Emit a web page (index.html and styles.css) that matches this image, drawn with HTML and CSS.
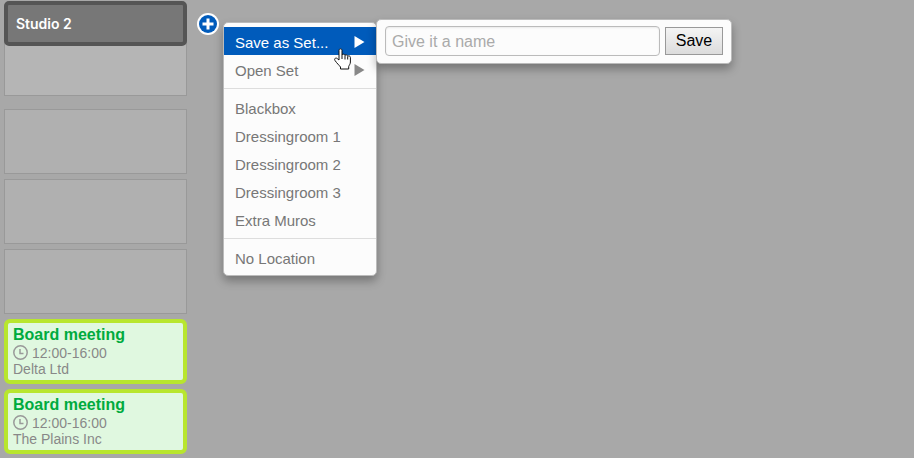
FILE: index.html
```html
<!DOCTYPE html>
<html lang="en">
<head>
<meta charset="utf-8">
<title>Studio 2 planning</title>
<link rel="stylesheet" href="styles.css">
</head>
<body>
<main class="board">
  <section class="column">
    <div class="lane">
      <h1 class="lane-title">Studio 2</h1>
    </div>
    <div class="slots">
      <div class="slot"></div>
      <div class="slot"></div>
      <div class="slot"></div>
      <article class="card">
        <h2 class="card-title">Board meeting</h2>
        <p class="card-line"><svg class="clock" viewBox="0 0 15 15" aria-hidden="true"><circle cx="7.500" cy="7.500" r="6.700"/><path d="M7 4v4.500h3.500"/></svg>12:00-16:00</p>
        <p class="card-line">Delta Ltd</p>
      </article>
      <article class="card">
        <h2 class="card-title">Board meeting</h2>
        <p class="card-line"><svg class="clock" viewBox="0 0 15 15" aria-hidden="true"><circle cx="7.500" cy="7.500" r="6.700"/><path d="M7 4v4.500h3.500"/></svg>12:00-16:00</p>
        <p class="card-line">The Plains Inc</p>
      </article>
    </div>
  </section>
  <div class="adder">
    <button class="add" type="button" aria-label="Add location">
      <svg viewBox="0 0 22 22" aria-hidden="true"><circle class="ring" cx="11" cy="11" r="11"/><circle class="disc" cx="11" cy="11" r="9"/><path class="plus" d="M11 5.500v11M5.500 11h11"/></svg>
    </button>
    <div class="popups">
      <nav class="menu">
        <button class="item active" type="button">Save as Set...<svg class="arrow" viewBox="0 0 10 12" aria-hidden="true"><path d="M0 0l10 6-10 6z"/></svg></button>
        <button class="item" type="button">Open Set<svg class="arrow" viewBox="0 0 10 12" aria-hidden="true"><path d="M0 0l10 6-10 6z"/></svg></button>
        <hr class="rule">
        <button class="item" type="button">Blackbox</button>
        <button class="item" type="button">Dressingroom 1</button>
        <button class="item" type="button">Dressingroom 2</button>
        <button class="item" type="button">Dressingroom 3</button>
        <button class="item" type="button">Extra Muros</button>
        <hr class="rule">
        <button class="item" type="button">No Location</button>
      </nav>
      <form class="save-form">
        <input class="name" type="text" placeholder="Give it a name" aria-label="Set name">
        <button class="save" type="button">Save</button>
      </form>
      <svg class="pointer" viewBox="0 0 17 22" aria-hidden="true"><path d="M5 12V2.500C5 .3 8 .3 8 2.500V7c.4-1.300 2.700-1.100 3 .5.600-1.200 2.500-.8 2.700.8.800-.9 2.700-.4 2.700 1.200V14c0 2-1.200 3-1.700 4.500V21H6.500v-2C5 17 3 15.500 1 12.500-.2 10.500 2 9.300 3.400 10.700z"/><path d="M8 7v4M11 7.500v4M13.700 8.500v3"/></svg>
    </div>
  </div>
</main>
</body>
</html>
```
FILE: styles.css
```css
* {
  box-sizing: border-box;
}

body {
  margin: 0;
  background: #a8a8a8;
  color: #777;
  font-family: "Liberation Sans", Arial, sans-serif;
}

button,
input {
  margin: 0;
  font-family: inherit;
}

.board {
  display: flex;
  align-items: flex-start;
  gap: 10px;
  min-height: 100vh;
  padding: 1px 4px 4px;
}

.column {
  flex: 0 0 20%;
  min-width: 183px;
}

.lane {
  min-height: 95px;
  margin-bottom: 13px;
  border: 1px solid #999;
  border-top: 0;
  border-radius: 6px 6px 0 0;
  background: #b5b5b5;
}

.lane-title {
  margin: 0 -1px;
  padding: 8px;
  border: 4px solid #555;
  border-radius: 5px;
  background: #777;
  color: #fff;
  font: 600 14px/21px Inter, sans-serif;
}

.slots {
  display: grid;
  grid-auto-rows: minmax(65px, auto);
  gap: 5px;
}

.slot {
  border: 1px solid #999;
  background: #b0b0b0;
}

.card {
  padding: 2px 5px 0;
  border: 4px solid #b8e62e;
  border-radius: 6px;
  background: #e0f8e0;
  color: #888;
}

.card-title {
  margin: 0;
  color: #00ab3e;
  font-size: 16px;
  line-height: 20px;
}

.card-line {
  display: flex;
  align-items: center;
  gap: 4px;
  margin: 0;
  font-size: 14px;
  line-height: 16px;
}

.clock {
  width: 15px;
  height: 15px;
  margin-bottom: 1px;
  fill: none;
  stroke: #999;
  stroke-width: 1.5;
}

.adder {
  position: relative;
  padding-top: 11px;
}

.add {
  display: block;
  width: 22px;
  height: 23px;
  padding: 1px 0 0;
  border: 0;
  background: none;
}

.add svg {
  display: block;
}

.ring {
  fill: #fff;
}

.disc {
  fill: #005bbb;
}

.plus {
  fill: none;
  stroke: #fff;
  stroke-width: 3;
}

.popups {
  position: absolute;
  top: 21px;
  left: 26px;
}

.menu {
  display: flex;
  flex-direction: column;
  width: 154px;
  padding: 4px 0;
  border: 1px solid #bbb;
  border-radius: 5px;
  background: #fcfcfc;
  box-shadow: 0 5px 10px rgba(0, 0, 0, 0.3);
}

.item {
  display: flex;
  align-items: center;
  justify-content: space-between;
  padding: 4px 11px 0;
  border: 0;
  background: none;
  color: #777;
  font-size: 15px;
  line-height: 24px;
  text-align: left;
}

.active {
  background: #005bbb;
  color: #fff;
}

.arrow {
  width: 11px;
  height: 12px;
  margin-bottom: 3px;
  fill: #888;
}

.active .arrow {
  fill: #fff;
}

.rule {
  width: 100%;
  margin: 5px 0 4px;
  border: 0;
  border-top: 1px solid #ddd;
}

.save-form {
  position: absolute;
  top: -3px;
  left: 153px;
  display: flex;
  align-items: center;
  gap: 5px;
  padding: 6px 8px 7px;
  border: 1px solid #bbb;
  border-radius: 5px;
  background: #fcfcfc;
  box-shadow: 0 5px 10px rgba(0, 0, 0, 0.3);
}

.name {
  width: 275px;
  height: 30px;
  padding: 1px 6px 0;
  border: 1px solid #bbb;
  border-radius: 4px;
  background: #fcfcfc;
  box-shadow: inset 0 1px 2px rgba(0, 0, 0, 0.08);
  color: #555;
  font-size: 16px;
}

.name::placeholder {
  color: #aaa;
  opacity: 1;
}

.save {
  width: 58px;
  height: 28px;
  padding: 0;
  border: 1px solid #999;
  background: linear-gradient(#f4f4f4, #dcdcdc);
  color: #000;
  font-size: 16px;
}

.pointer {
  position: absolute;
  top: 26px;
  left: 111px;
  width: 17px;
  height: 22px;
  fill: #fff;
  stroke: #111;
  stroke-width: 1;
}
```
